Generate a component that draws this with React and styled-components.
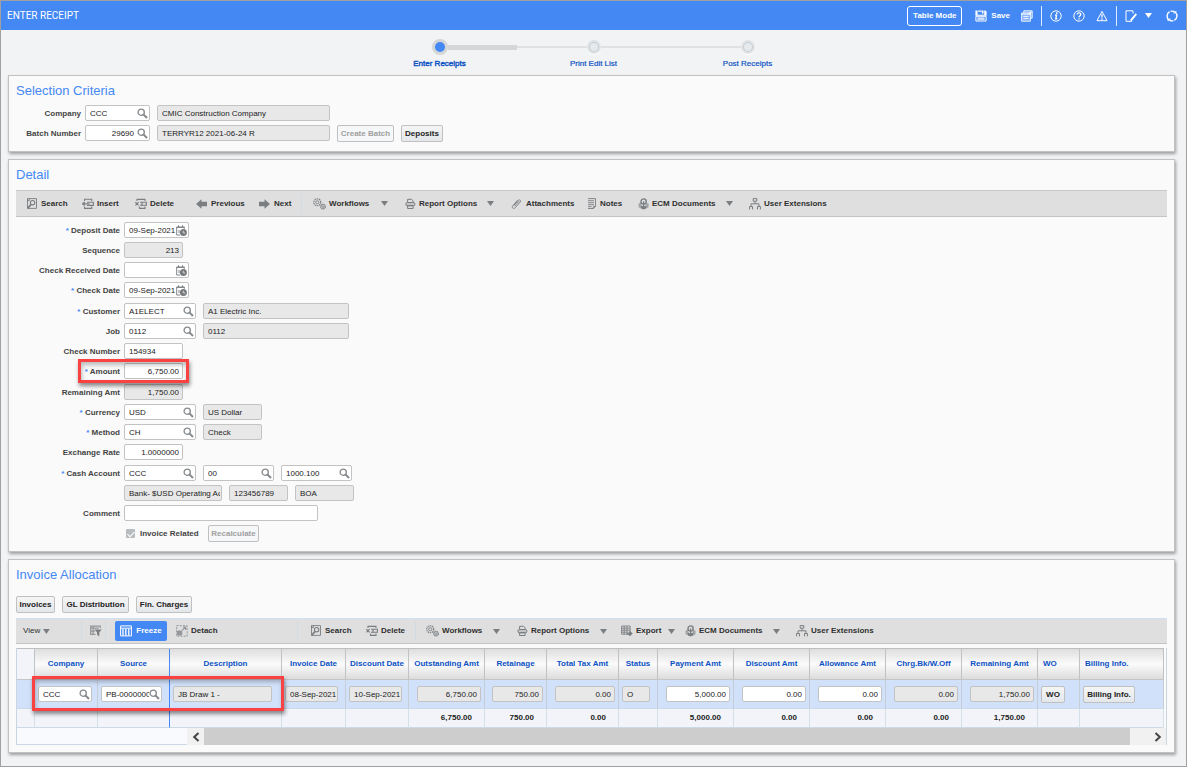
import React from "react";
import styled, { createGlobalStyle, css } from "styled-components";

const blue = "#4488f4";
const link = "#0d52c4";
const ink = "#7a7e81";

const GlobalStyle = createGlobalStyle`
  * { box-sizing: border-box; }
  body {
    margin: 0;
    background: #f1f3f5;
    color: #333;
    font: 8px/12px "Liberation Sans", Arial, sans-serif;
  }
  button, input { font: inherit; color: inherit; }
  button { cursor: pointer; }
`;

const Page = styled.div`
  min-height: 100vh;
  border: 1px solid #a0a0a0;
`;

const Header = styled.header`
  display: flex;
  align-items: center;
  height: 29px;
  padding: 0 8px 0 6px;
  background: ${blue};
  color: #fff;
`;

const PageTitle = styled.h1`
  flex: 1;
  margin: 0;
  font: 400 10px/14px Roboto, "Liberation Sans", sans-serif;
`;

const TableModeButton = styled.button`
  width: 55px;
  height: 20px;
  margin-right: 13px;
  padding: 1px 0 0;
  border: 1px solid #fff;
  border-radius: 3px;
  background: transparent;
  font-weight: 700;
`;

const HeaderButton = styled.button`
  display: flex;
  align-items: center;
  gap: ${(p) => p.$gap ?? 4}px;
  padding: 0;
  border: 0;
  background: transparent;
  font-weight: 700;
`;

const HeaderGroup = styled.div`
  display: flex;
  align-items: center;
  height: 20px;
  gap: ${(p) => p.$gap}px;
  & + & {
    margin-left: 8px;
    padding-left: 8px;
    border-left: 1px solid #dfeaff;
  }
`;

const Steps = styled.ol`
  display: flex;
  justify-content: center;
  height: 45px;
  margin: 0;
  padding: 9px 0 0;
  list-style: none;
`;

const Step = styled.li`
  display: flex;
  flex-direction: column;
  align-items: center;
  width: 154px;
  color: ${link};
  a {
    color: inherit;
    text-decoration: none;
    -webkit-text-stroke: ${(p) => (p.$current ? "0.4px" : "0.2px")};
  }
`;

const StepTrack = styled.div`
  display: flex;
  align-items: center;
  width: 100%;
  height: 16px;
  margin-bottom: 3px;
`;

const Rail = styled.span`
  flex: 1;
  height: ${(p) => (p.$done ? 5 : 2)}px;
  background: ${(p) => (p.$hidden ? "transparent" : p.$done ? "#d6d6d6" : "#dfe1e2")};
`;

const Dot = styled.span`
  width: ${(p) => (p.$current ? 16 : 14)}px;
  height: ${(p) => (p.$current ? 16 : 14)}px;
  border: ${(p) => (p.$current ? 3 : 2)}px solid ${(p) => (p.$current ? "#d4d6d8" : "#e0e2e4")};
  border-radius: 50%;
  background: ${(p) => (p.$current ? blue : "#e6eaec")};
  box-shadow: ${(p) => (p.$current ? "none" : "inset 0 0 0 1px #bcc8d2, 0 1px 0 #fff")};
`;

const Panel = styled.section`
  margin: 0 11px 7px 7px;
  padding: 7px 7px ${(p) => p.$bottom}px;
  border: 1px solid #c2c2c2;
  background: #fafafa;
  box-shadow: 1px 2px 3px rgba(0, 0, 0, 0.35);
`;

const PanelTitle = styled.h2`
  margin: 0 0 ${(p) => p.$gap}px;
  color: ${blue};
  font-size: 13px;
  font-weight: 400;
  line-height: 15px;
`;

const FieldGroup = styled.div`
  margin-bottom: 1px;
`;

const Row = styled.div`
  position: relative;
  display: flex;
  align-items: center;
  height: 20px;
  gap: 7px;
`;

const RowLabel = styled.label`
  flex: none;
  width: ${(p) => p.$width}px;
  margin-right: -3px;
  padding-top: 2px;
  color: #444;
  font-weight: 700;
  text-align: right;
  white-space: nowrap;
  i { color: ${blue}; font-style: normal; }
`;

const FieldBox = styled.span`
  display: flex;
  flex: none;
  align-items: center;
  width: ${(p) => p.$width}px;
  height: 16px;
  padding: 0 ${(p) => (p.$right && !p.$icon ? 3 : 1)}px 0 4px;
  border: 1px solid #c3c3c3;
  border-radius: 2px;
  background: ${(p) => (p.$readOnly ? "#e8e8e8" : "#fff")};
  input {
    flex: 1;
    width: 0;
    min-width: 0;
    height: 14px;
    padding: 0;
    border: 0;
    outline: 0;
    background: transparent;
    color: #222;
    text-align: ${(p) => (p.$right ? "right" : "left")};
  }
  svg { flex: none; margin-left: ${(p) => (p.$right ? 3 : 0)}px; }
`;

const Button = styled.button`
  flex: none;
  width: ${(p) => p.$width}px;
  height: 17px;
  padding: 1px 0 0;
  border: 1px solid #c0c0c0;
  border-radius: 2px;
  background: linear-gradient(#f4f5f6, #e4e7ea);
  color: #222;
  font-weight: 700;
  white-space: nowrap;
  &:disabled { background: #f6f7f8; color: #a0a0a0; cursor: default; }
`;

const ButtonRow = styled.div`
  display: flex;
  gap: 7px;
  margin-bottom: 5px;
`;

const CheckLabel = styled.label`
  display: flex;
  align-items: center;
  gap: 5px;
  width: 75px;
  margin-left: 110px;
  padding-top: 1px;
  color: #444;
  font-weight: 700;
  white-space: nowrap;
`;

const CheckBox = styled.input`
  appearance: none;
  display: grid;
  place-items: center;
  width: 9px;
  height: 9px;
  margin: 0;
  border-radius: 1px;
  background: #b9bcbf;
  &:checked::after {
    content: "";
    width: 3px;
    height: 6px;
    margin-top: -1px;
    border: solid #fff;
    border-width: 0 1px 1px 0;
    transform: rotate(45deg);
  }
`;

const Marker = styled.span`
  position: absolute;
  z-index: 2;
  pointer-events: none;
  border: 3px solid #fa4242;
  box-shadow: 1px 3px 4px rgba(0, 0, 0, 0.45), inset 1px 3px 4px rgba(0, 0, 0, 0.25);
  ${(p) =>
    p.$kind === "row"
      ? css`top: 28px; left: 15px; width: 252px; height: 35px;`
      : css`top: -2px; left: 62px; width: 111px; height: 24px;`}
`;

const Toolbar = styled.div`
  display: flex;
  align-items: center;
  height: ${(p) => (p.$table ? 26 : 27)}px;
  margin-bottom: ${(p) => (p.$table ? 4 : 3)}px;
  border-top: 1px solid ${(p) => (p.$table ? "#cfdff5" : "#c8c8c8")};
  border-bottom: 1px solid #c4c4c4;
  background: #dfdfdf;
`;

const Tool = styled.button`
  display: flex;
  flex: none;
  align-items: center;
  gap: 3px;
  width: ${(p) => p.$width}px;
  height: 20px;
  padding: 0;
  border: 0;
  background: transparent;
  color: #2f2f2f;
  font-weight: ${(p) => (p.$plain ? 400 : 700)};
  white-space: nowrap;
  .caret { margin-left: auto; }
`;

const ToolGap = styled.span`
  flex: none;
  width: ${(p) => p.$width}px;
`;

const FreezeButton = styled.button`
  display: flex;
  flex: none;
  align-items: center;
  justify-content: center;
  gap: 4px;
  width: 52px;
  height: 20px;
  margin-right: 9px;
  padding: 0;
  border: 0;
  border-radius: 2px;
  background: ${blue};
  color: #fff;
  font-weight: 700;
`;

const ToolDivider = styled.span`
  flex: none;
  width: 1px;
  height: 20px;
  margin-right: ${(p) => p.$after}px;
  background: #d3dbe2;
`;

const GridFrame = styled.div`
  position: relative;
  padding-right: 2px;
  border-left: 1px solid #c9d5df;
  border-right: 1px solid #c9d5df;
`;

const Grid = styled.table`
  width: 100%;
  table-layout: fixed;
  border-collapse: separate;
  border-spacing: 0;
  border-top: 1px solid #bfbfbf;

  th, td { padding: 0; overflow: hidden; white-space: nowrap; }
  th {
    height: 31px;
    border-right: 1px solid #bfc3c6;
    border-bottom: 1px solid #c6c6c6;
    background: linear-gradient(#dedede, #fbfbfb 50%, #dcdcdc);
    color: ${link};
    font-weight: 700;
    text-align: center;
  }
  td { border-right: 1px solid #c5cdd6; }
  tbody td {
    height: 29px;
    padding: 0 3px;
    border-bottom: 1px solid #ccd9e6;
    background: #d2e1fa;
  }
  tfoot td {
    height: 19px;
    padding-right: 12px;
    border-right-color: #d5dfe7;
    border-bottom: 1px solid #ccd9e6;
    background: #f2f4f9;
    color: #222;
    font-weight: 700;
    text-align: right;
  }
  tr > :first-child { background: #f2f4f9; }
  tbody tr > :first-child { background: #d2e1fa; }
  tr > :nth-child(3) { border-right-color: ${blue}; }
  th.start { padding-left: 5px; text-align: left; }
  tbody td.num > span { margin-left: auto; }
`;

const ScrollBar = styled.div`
  display: flex;
  height: 17px;
  margin-right: -2px;
  background: #f1f1f1;
`;

const ScrollSpacer = styled.span`
  width: 170px;
  border-bottom: 1px solid #ccd9e6;
  background: #f8fafd;
`;

const ScrollThumb = styled.span`
  flex: 1;
  margin-right: 19px;
  background: #cdcdcd;
`;

const ScrollButton = styled.button`
  display: grid;
  place-items: center;
  width: 17px;
  padding: 0;
  border: 0;
  background: transparent;
`;

const glyphs = {
  lookup: (
    <g fill="none" stroke="#85898c">
      <circle cx="4.2" cy="4.2" r="3.1" strokeWidth="1.3" />
      <path d="M6.4 6.4 10 10" strokeWidth="2" />
    </g>
  ),
  date: (
    <g>
      <path d="M4 10H.7V2h7.6v1.8M.7 2.4h7.6M2.5.3v2M6.5.3v2M3 5v3" fill="none" stroke="#808487" />
      <circle cx="7.4" cy="7.4" r="3.5" fill="#777b7e" />
      <path d="M7.3 5.8v2l1.9.2" stroke="#e8e8e8" strokeWidth=".8" fill="none" />
    </g>
  ),
  search: (
    <g fill="none" stroke={ink}>
      <path d="M1.5.6h9v9.8h-9zM1.5 3V.6M3.3.6v2h-2" strokeWidth=".9" />
      <circle cx="6.6" cy="4.7" r="2.2" strokeWidth="1.1" />
      <path d="M5 6.5 1.6 10.4" strokeWidth="1.8" />
    </g>
  ),
  insert: (
    <g fill="none" stroke={ink}>
      <path d="M2.5 3V1.3h7.2V3M2.5 8.4v2h7.2v-2M5 4.2h6.4v3.2H5" strokeWidth="1.1" />
      <path d="M0 5.8h7.500M2.600 4l-1.900 1.800 1.900 1.800" strokeWidth="1.3" />
    </g>
  ),
  delete: (
    <g fill="none" stroke={ink}>
      <path d="M2 3V1.400h8V3M4.500 8.400v2h5.500v-2M5 4.300h6.400v3H5" strokeWidth="1.1" />
      <path d="M.4 4.200l3.200 3.200M3.600 4.200.4 7.400M7 4.500v3" strokeWidth="1.2" />
    </g>
  ),
  prev: <path d="M0 6 5.500 1.200v2.600H11v4.400H5.500v2.600z" fill={ink} />,
  next: <path d="M11 6 5.500 1.200v2.600H0v4.400h5.500v2.600z" fill={ink} />,
  workflows: (
    <g fill="none" stroke={ink}>
      <circle cx="4.300" cy="4.300" r="3.500" strokeDasharray="1.600 .600" strokeWidth="1.100" />
      <circle cx="4.300" cy="4.300" r="1.600" strokeWidth=".9" />
      <circle cx="10" cy="8.600" r="2.300" strokeDasharray="1.400 .400" strokeWidth="1.200" />
      <circle cx="10" cy="8.600" r=".9" strokeWidth=".8" />
    </g>
  ),
  print: (
    <g fill="none" stroke={ink}>
      <path d="M2.600 4.200V1.300h3.900l1.600 1.500v1.400M2.600 7.800v2.700h5.500V7.800" />
      <rect x=".9" y="4.500" width="9" height="3.400" rx="1.500" fill="#c4c4c4" />
      <path d="M2.600 7.500h5.500" />
    </g>
  ),
  attach: (
    <path d="M3.600 8.300 8 3.200M2.600 7.600 7.200 2.400c1.300-1.400 3.200.2 2 1.600L4.400 9.600c-1.800 2-4.200 0-2.600-1.900L6.500 2.200" fill="none" stroke={ink} strokeWidth=".9" />
  ),
  notes: (
    <g fill="none" stroke={ink}>
      <path d="M1 .6h7.500v7.900l-2 2H1" strokeWidth=".9" />
      <path d="M1 2.700h6M1 4.700h6M1 6.700h6M1 8.700h3.500M6.300 10.500V8.400h2.200" strokeWidth=".9" />
    </g>
  ),
  ecm: (
    <g>
      <path d="M.6 5.600l2.600-1v6L.6 9.300zM8 4.700l2.600 1v3.600L8 10.500z" fill="#a2a5a7" />
      <path d="M3 7.600l2.500.9v3L3 10.400zM8.200 7.600v2.800l-2.700 1.100v-3z" fill={ink} />
      <circle cx="5.600" cy="3.500" r="2.600" fill="#dfdfdf" stroke={ink} strokeWidth="1.400" />
      <path d="M5.600 3.400v5.400" stroke={ink} strokeWidth="1.300" />
    </g>
  ),
  users: (
    <g fill="none" stroke={ink}>
      <path d="M4.200.6h3.600v2.600H4.200zM6 3.400v2.400M2 8V5.800h8V8M.6 11.400V8.500h2.900v2.900M8.500 11.400V8.500h2.900v2.900" />
    </g>
  ),
  export: (
    <g fill="none" stroke={ink}>
      <path d="M.6 1h8.500v8.200H.6zM.6 3.200h8.500M.6 5.200h8.500M.6 7.200h6M3.200 1v8.200M6 1v8.200" strokeWidth=".9" />
      <path d="M6 8.600h4M8.300 6.600l2.300 2-2.300 2" strokeWidth="1.600" />
    </g>
  ),
  filter: (
    <g>
      <path d="M5.500 9.300H.7V1.200h9.600v1.900M.7 3.200h8M3.100 1v8M.7 6.200H5" fill="none" stroke="#94979a" strokeWidth="1.200" />
      <path d="M4.400 4.400h7.400L9.300 7.200v4.400L7 9.600V7.200z" fill={ink} />
    </g>
  ),
  freeze: (
    <g fill="none" stroke="#fff">
      <path d="M.6.900h10.800v10H.6zM.6 3.200h10.800" />
      <path d="M3 4v6.500M5.800 4v6.500M8.800 4v6.500" strokeWidth="1.300" />
    </g>
  ),
  detach: (
    <g fill="none" stroke="#94979a">
      <path d="M.6.700h10.500v10.500H.6z" strokeDasharray="2 1.200" />
      <path d="M6.200 5.400 9.400 2.200M6.800 2h2.900v2.900" strokeWidth="1.200" />
      <path d="M1.600 6h4.200v4H1.600z" fill="#94979a" />
    </g>
  ),
  save: (
    <g>
      <path d="M.4.500h2.200v4.200h6.600V.5h1.300l1.100 1V5.700H.4zM3.200.5h3.400v1.200H3.200zM6.900.5h1.600v3.100H6.900z" fill="#fff" />
      <path d="M.9 6.300h10.200v4.700H.9z" fill="none" stroke="#fff" />
      <path d="M2.400 7.300h7.200v2.900H2.400z" fill="#c9dcfc" />
    </g>
  ),
  forms: (
    <g>
      <path d="M2.800 3V.8h8.400v7.400H9.400M.6 3h8.800v8.200H.6z" fill="#84b1fa" stroke="#e6efff" />
      <path d="M.6 4.200h8.800M2.300 6.400h5.200M2.300 8.600h5.200" stroke="#fff" strokeWidth=".9" />
      <path d="M7.500 4.400 10.300 1.700" stroke="#fff" strokeWidth="1.200" />
    </g>
  ),
  info: (
    <g fill="none" stroke="#fff">
      <circle cx="6" cy="6" r="5.200" />
      <path d="M6.800 2.300v1.600M5 5.100h1.500l-.7 3.700h1.500" strokeWidth="1.400" />
    </g>
  ),
  help: (
    <g fill="none" stroke="#fff">
      <circle cx="6" cy="6" r="5.200" />
      <path d="M4.200 4.600c0-2.300 3.700-2.200 3.600 0C7.800 5.900 6 5.700 6 7.300M6 8.300v1.300" strokeWidth="1.300" />
    </g>
  ),
  warn: (
    <g fill="none" stroke="#fff">
      <path d="M6 1.400 11 10.700H1z" />
      <path d="M6 4.200v3.200M6 8.300v1.400" strokeWidth="1.300" />
    </g>
  ),
  edit: (
    <g fill="none" stroke="#fff">
      <path d="M8 3.500V.8H1v10.500h4" />
      <path d="M5.800 10.600 11.300 3.900" strokeWidth="2" />
      <path d="M4.600 11.400h2.200" />
    </g>
  ),
  refresh: (
    <g fill="none" stroke="#fff" strokeWidth="1.400">
      <path d="M3.100 10A4.900 4.900 0 0 1 3.600 1.700M8.900 2A4.900 4.900 0 0 1 8.400 10.300M4.600 1.300a4.900 4.900 0 0 1 3.400.2M7.400 10.700a4.900 4.900 0 0 1-3.400-.2" />
      <path d="M1.400 10.200h2.400V8.400M10.600 1.800H8.200v1.800" strokeWidth="1.100" />
    </g>
  ),
};

function Icon({ name, width = 12, size = 12 }) {
  return (
    <svg width={width} height={size} viewBox={`0 0 ${width} ${size}`} aria-hidden="true">
      {glyphs[name]}
    </svg>
  );
}

function Caret({ color = ink }) {
  return (
    <svg className="caret" width="7" height="5" viewBox="0 0 7 5" aria-hidden="true">
      <path d="M0 0h7L3.500 5z" fill={color} />
    </svg>
  );
}

function Field({ width, value = "", icon, right, readOnly, id, label }) {
  return (
    <FieldBox $width={width} $icon={!!icon} $right={right} $readOnly={readOnly}>
      <input id={id} aria-label={label} defaultValue={value} readOnly={readOnly} />
      {icon && <Icon name={icon} width={11} size={11} />}
    </FieldBox>
  );
}

function FormRow({ label, required, labelWidth = 104, fields = [], marked, children }) {
  const id = label.toLowerCase().replace(/\s+/g, "-");
  return (
    <Row>
      <RowLabel htmlFor={id} $width={labelWidth}>
        {required && <i>* </i>}
        {label}
      </RowLabel>
      {fields.map((f, i) => (
        <Field key={i} {...f} id={i === 0 ? id : undefined} label={i ? `${label} ${i + 1}` : undefined} />
      ))}
      {children}
      {marked && <Marker />}
    </Row>
  );
}

const ro = (width, value, right) => ({ width, value, right, readOnly: true });
const look = (width, value, right) => ({ width, value, right, icon: "lookup" });

const groups = [
  [
    { label: "Deposit Date", required: true, fields: [{ width: 65, value: "09-Sep-2021", icon: "date" }] },
    { label: "Sequence", fields: [ro(59, "213", true)] },
    { label: "Check Received Date", fields: [{ width: 65, icon: "date" }] },
    { label: "Check Date", required: true, fields: [{ width: 65, value: "09-Sep-2021", icon: "date" }] },
  ],
  [
    { label: "Customer", required: true, fields: [look(72, "A1ELECT"), ro(146, "A1 Electric Inc.")] },
    { label: "Job", fields: [look(72, "0112"), ro(146, "0112")] },
    { label: "Check Number", fields: [{ width: 59, value: "154934" }] },
    { label: "Amount", required: true, marked: true, fields: [{ width: 59, value: "6,750.00", right: true }] },
  ],
  [
    { label: "Remaining Amt", fields: [ro(59, "1,750.00", true)] },
    { label: "Currency", required: true, fields: [look(72, "USD"), ro(59, "US Dollar")] },
    { label: "Method", required: true, fields: [look(72, "CH"), ro(59, "Check")] },
    { label: "Exchange Rate", fields: [{ width: 59, value: "1.0000000", right: true }] },
  ],
];

const detailTools = [
  { icon: "search", text: "Search", width: 56 },
  { icon: "insert", text: "Insert", width: 53 },
  { icon: "delete", text: "Delete", width: 61 },
  { icon: "prev", text: "Previous", width: 63 },
  { icon: "next", text: "Next", width: 42 },
  { divider: 11 },
  { icon: "workflows", text: "Workflows", width: 75, caret: true, iconWidth: 13, after: 17 },
  { icon: "print", text: "Report Options", width: 89, caret: true, iconWidth: 11, after: 17 },
  { icon: "attach", text: "Attachments", width: 76 },
  { icon: "notes", text: "Notes", width: 51, iconWidth: 10 },
  { icon: "ecm", text: "ECM Documents", width: 95, caret: true, iconWidth: 11, after: 16 },
  { icon: "users", text: "User Extensions", width: 80 },
];

const tableTools = [
  { icon: "search", text: "Search", width: 56 },
  { icon: "delete", text: "Delete", width: 49 },
  { divider: 10 },
  { icon: "workflows", text: "Workflows", width: 74, caret: true, iconWidth: 13, after: 17 },
  { icon: "print", text: "Report Options", width: 90, caret: true, iconWidth: 11, after: 14 },
  { icon: "export", text: "Export", width: 54, caret: true, after: 10 },
  { icon: "ecm", text: "ECM Documents", width: 95, caret: true, iconWidth: 11, after: 16 },
  { icon: "users", text: "User Extensions", width: 80 },
];

function Tools({ items }) {
  return items.map((t) =>
    t.divider ? (
      <ToolDivider key="divider" $after={t.divider} />
    ) : (
      <React.Fragment key={t.text}>
        <Tool $width={t.width}>
          <Icon name={t.icon} width={t.iconWidth} />
          {t.text}
          {t.caret && <Caret />}
        </Tool>
        {t.after && <ToolGap $width={t.after} />}
      </React.Fragment>
    )
  );
}

const columns = [
  { name: "Company", width: 63, field: look(54, "CCC") },
  { name: "Source", width: 72, field: look(61, "PB-00000001") },
  { name: "Description", width: 112, field: ro(99, "JB Draw 1 -") },
  { name: "Invoice Date", width: 64, field: ro(53, "08-Sep-2021") },
  { name: "Discount Date", width: 63, field: ro(53, "10-Sep-2021") },
  { name: "Outstanding Amt", width: 76, field: ro(64, "6,750.00", true), total: "6,750.00" },
  { name: "Retainage", width: 62, field: ro(51, "750.00", true), total: "750.00" },
  { name: "Total Tax Amt", width: 72, field: ro(60, "0.00", true), total: "0.00" },
  { name: "Status", width: 39, field: ro(28, "O") },
  { name: "Payment Amt", width: 76, field: { width: 64, value: "5,000.00", right: true }, total: "5,000.00" },
  { name: "Discount Amt", width: 76, field: { width: 64, value: "0.00", right: true }, total: "0.00" },
  { name: "Allowance Amt", width: 76, field: { width: 64, value: "0.00", right: true }, total: "0.00" },
  { name: "Chrg.Bk/W.Off", width: 76, field: ro(64, "0.00", true), total: "0.00" },
  { name: "Remaining Amt", width: 76, field: ro(64, "1,750.00", true), total: "1,750.00" },
  { name: "WO", width: 42, button: 24 },
  { name: "Billing Info.", button: 52 },
];

export default function App() {
  return (
    <Page>
      <GlobalStyle />
      <Header>
        <PageTitle>ENTER RECEIPT</PageTitle>
        <TableModeButton>Table Mode</TableModeButton>
        <HeaderGroup $gap={11}>
          <HeaderButton><Icon name="save" />Save</HeaderButton>
          <HeaderButton aria-label="Forms"><Icon name="forms" /></HeaderButton>
        </HeaderGroup>
        <HeaderGroup $gap={11}>
          <HeaderButton aria-label="Information"><Icon name="info" /></HeaderButton>
          <HeaderButton aria-label="Help"><Icon name="help" /></HeaderButton>
          <HeaderButton aria-label="Warnings"><Icon name="warn" /></HeaderButton>
        </HeaderGroup>
        <HeaderGroup $gap={14}>
          <HeaderButton $gap={8} aria-label="Edit"><Icon name="edit" /><Caret color="#fff" /></HeaderButton>
          <HeaderButton aria-label="Refresh"><Icon name="refresh" /></HeaderButton>
        </HeaderGroup>
      </Header>

      <Steps>
        <Step $current>
          <StepTrack><Rail $hidden /><Dot $current /><Rail $done /></StepTrack>
          <a href="#enter">Enter Receipts</a>
        </Step>
        <Step>
          <StepTrack><Rail /><Dot /><Rail /></StepTrack>
          <a href="#print">Print Edit List</a>
        </Step>
        <Step>
          <StepTrack><Rail /><Dot /><Rail $hidden /></StepTrack>
          <a href="#post">Post Receipts</a>
        </Step>
      </Steps>

      <Panel $bottom={8}>
        <PanelTitle $gap={5}>Selection Criteria</PanelTitle>
        <FormRow label="Company" labelWidth={65} fields={[look(65, "CCC"), ro(173, "CMIC Construction Company")]} />
        <FormRow label="Batch Number" labelWidth={65} fields={[look(65, "29690", true), ro(173, "TERRYR12 2021-06-24 R")]}>
          <Button $width={57} disabled>Create Batch</Button>
          <Button $width={42}>Deposits</Button>
        </FormRow>
      </Panel>

      <Panel $bottom={8}>
        <PanelTitle $gap={8}>Detail</PanelTitle>
        <Toolbar>
          <ToolGap $width={10} />
          <Tools items={detailTools} />
        </Toolbar>
        {groups.map((rows) => (
          <FieldGroup key={rows[0].label}>
            {rows.map((r) => <FormRow key={r.label} {...r} />)}
          </FieldGroup>
        ))}
        <FormRow label="Cash Account" required fields={[look(72, "CCC"), look(71, "00"), look(71, "1000.100")]} />
        <Row>
          <RowLabel as="span" $width={104} />
          <Field {...ro(98, "Bank- $USD Operating Ac")} label="Bank name" />
          <Field {...ro(59, "123456789")} label="Bank account" />
          <Field {...ro(59, "BOA")} label="Bank code" />
        </Row>
        <FormRow label="Comment" fields={[{ width: 194 }]} />
        <Row>
          <CheckLabel>
            <CheckBox type="checkbox" defaultChecked disabled />
            Invoice Related
          </CheckLabel>
          <Button $width={51} disabled>Recalculate</Button>
        </Row>
      </Panel>

      <Panel $bottom={7}>
        <PanelTitle $gap={14}>Invoice Allocation</PanelTitle>
        <ButtonRow>
          <Button $width={39}>Invoices</Button>
          <Button $width={67}>GL Distribution</Button>
          <Button $width={56}>Fin. Charges</Button>
        </ButtonRow>
        <Toolbar $table>
          <ToolGap $width={7} />
          <Tool $width={27} $plain>View<Caret /></Tool>
          <ToolGap $width={31} />
          <ToolDivider $after={8} />
          <Tool $width={15} aria-label="Query by example"><Icon name="filter" /></Tool>
          <ToolDivider $after={9} />
          <FreezeButton><Icon name="freeze" />Freeze</FreezeButton>
          <Tool $width={121}><Icon name="detach" />Detach</Tool>
          <ToolDivider $after={12} />
          <Tools items={tableTools} />
        </Toolbar>
        <GridFrame>
          <Grid>
            <colgroup>
              <col width="18" />
              {columns.map((c) => <col key={c.name} width={c.width} />)}
            </colgroup>
            <thead>
              <tr>
                <th aria-label="Row" />
                {columns.map((c) => (
                  <th key={c.name} scope="col" className={c.button ? "start" : undefined}>{c.name}</th>
                ))}
              </tr>
            </thead>
            <tbody>
              <tr>
                <td />
                {columns.map((c) => (
                  <td key={c.name} className={c.field?.right ? "num" : undefined}>
                    {c.field ? <Field {...c.field} label={c.name} /> : <Button $width={c.button}>{c.name}</Button>}
                  </td>
                ))}
              </tr>
            </tbody>
            <tfoot>
              <tr>
                <td />
                {columns.map((c) => <td key={c.name}>{c.total}</td>)}
              </tr>
            </tfoot>
          </Grid>
          <ScrollBar>
            <ScrollSpacer />
            <ScrollButton aria-label="Scroll left">
              <svg width="8" height="10" viewBox="0 0 8 10"><path d="M6.500 1 2.200 5l4.300 4" fill="none" stroke="#444" strokeWidth="2" /></svg>
            </ScrollButton>
            <ScrollThumb />
            <ScrollButton aria-label="Scroll right">
              <svg width="8" height="10" viewBox="0 0 8 10"><path d="M1.500 1l4.300 4-4.300 4" fill="none" stroke="#444" strokeWidth="2" /></svg>
            </ScrollButton>
          </ScrollBar>
          <Marker $kind="row" />
        </GridFrame>
      </Panel>
    </Page>
  );
}
